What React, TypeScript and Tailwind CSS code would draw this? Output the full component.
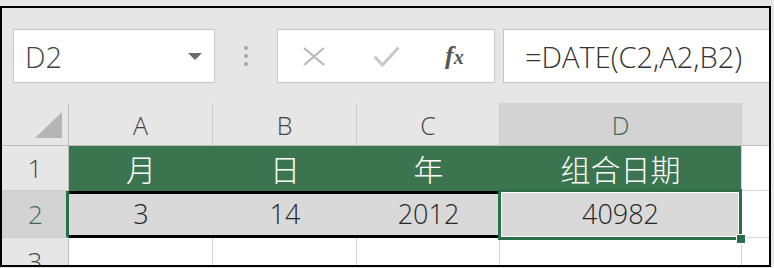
import React from "react";

const cols = ["A", "B", "C"];
const headers = ["月", "日", "年"];
const values = ["3", "14", "2012"];

function FormulaBar() {
  return (
    <div className="h-[95px] shrink-0 flex items-start pt-[21px] pl-[11px]">
      <div className="w-[202px] h-[54px] bg-white border border-[#c6c6c6] flex items-center justify-between pl-[11px] pr-[12px]">
        <span className="text-[29px] text-[#444] leading-none">D2</span>
        <svg width="14" height="7" viewBox="0 0 14 7">
          <polygon points="0,0 14,0 7,7" fill="#6b6b6b" />
        </svg>
      </div>
      <div className="ml-[29px] h-[54px] w-[4px] flex flex-col items-center justify-center gap-[4px]">
        <span className="w-[4px] h-[4px] rounded-full bg-[#a6a6a6]" />
        <span className="w-[4px] h-[4px] rounded-full bg-[#a6a6a6]" />
        <span className="w-[4px] h-[4px] rounded-full bg-[#a6a6a6]" />
      </div>
      <div className="ml-[29px] w-[218px] h-[54px] bg-white border border-[#c6c6c6] flex items-center pl-[25px]">
        <svg width="22" height="19" viewBox="0 0 22 19">
          <path d="M1 1 L21 18 M21 1 L1 18" stroke="#b8b8b8" strokeWidth="2.2" fill="none" />
        </svg>
        <svg className="ml-[48px]" width="27" height="21" viewBox="0 0 27 21">
          <path d="M1.5 10.5 L9.5 19 L25.5 1.5" stroke="#c9c9c9" strokeWidth="3.2" fill="none" />
        </svg>
        <span className="ml-[45px] font-['Liberation_Serif',serif] italic font-bold text-[#555] text-[26px] leading-none">
          f<span className="text-[20px]">x</span>
        </span>
      </div>
      <div className="ml-[8px] flex-1 h-[54px] bg-white border-y border-l border-[#c6c6c6] flex items-center pl-[21px]">
        <span className="text-[29px] text-[#333] leading-none">=DATE(C2,A2,B2)</span>
      </div>
    </div>
  );
}

function Grid() {
  return (
    <div className="grid grid-cols-[67px_144px_144px_143px_241px_28px] grid-rows-[43px_45px_47px_46px]">
      {/* header row */}
      <div className="bg-[#e6e6e6] border-r border-b border-[#bdbdbd] flex items-end justify-end pr-[6px] pb-[7px]">
        <svg width="27" height="26" viewBox="0 0 27 26">
          <polygon points="27,0 27,26 0,26" fill="#b5b5b5" />
        </svg>
      </div>
      {cols.map((c) => (
        <div
          key={c}
          className="bg-[#e6e6e6] border-r border-r-[#cacaca] border-b border-b-[#bdbdbd] flex items-center justify-center pt-[3px] text-[25px] text-[#444]"
        >
          {c}
        </div>
      ))}
      <div className="bg-[#d3d3d3] border-b border-[#bdbdbd] flex items-center justify-center pt-[3px] text-[25px] text-[#3b6b52]">
        D
      </div>
      <div className="bg-[#e6e6e6] border-l border-l-[#c6c6c6] border-b border-b-[#bdbdbd]" />

      {/* row 1 */}
      <div className="bg-[#e6e6e6] border-r border-r-[#bdbdbd] border-b border-b-[#cacaca] flex items-center justify-center text-[26px] text-[#444]">
        1
      </div>
      {headers.map((h) => (
        <div key={h} className="bg-[#3b7550] flex items-center justify-center text-white text-[30px] font-['Noto_Sans_CJK_SC',sans-serif]">
          {h}
        </div>
      ))}
      <div className="bg-[#3b7550] flex items-center justify-center text-white text-[30px] font-['Noto_Sans_CJK_SC',sans-serif]">
        组合日期
      </div>
      <div className="bg-white border-l border-b border-[#d4d4d4]" />

      {/* row 2 */}
      <div className="bg-[#d3d3d3] border-r-[3px] border-r-[#217346] border-b border-b-[#cacaca] flex items-center justify-center pl-[3px] text-[26px] text-[#3b6b52]">
        2
      </div>
      {values.map((v) => (
        <div key={v} className="bg-[#d9d9d9] border-y-[3px] border-black flex items-center justify-center text-[27px] text-[#262626]">
          {v}
        </div>
      ))}
      <div className="relative bg-[#d9d9d9] flex items-center justify-center text-[27px] text-[#262626]">
        40982
        <div className="absolute -left-[2px] -top-[2px] -right-[1px] -bottom-[2px] border-[3px] border-[#2c6e47] shadow-[inset_0_0_0_1px_white] z-10" />
        <div className="absolute -right-[5px] -bottom-[6px] w-[10px] h-[10px] bg-[#2c6e47] border border-white z-20" />
      </div>
      <div className="bg-white border-l border-b border-[#d4d4d4]" />

      {/* row 3 */}
      <div className="bg-[#e6e6e6] border-r border-[#bdbdbd] flex items-center justify-center text-[26px] text-[#444]">
        3
      </div>
      <div className="bg-white border-r border-[#d4d4d4]" />
      <div className="bg-white border-r border-[#d4d4d4]" />
      <div className="bg-white border-r border-[#d4d4d4]" />
      <div className="bg-white" />
      <div className="bg-white border-l border-[#d4d4d4]" />
    </div>
  );
}

export default function App() {
  return (
    <div className="w-[774px] h-[268px] bg-[#e6e6e6] pt-[6px] font-['Open_Sans','Noto_Sans_CJK_SC',sans-serif] font-light">
      <div className="w-[771px] h-[261px] border-2 border-black overflow-hidden flex flex-col bg-[#e6e6e6]">
        <FormulaBar />
        <Grid />
      </div>
    </div>
  );
}
